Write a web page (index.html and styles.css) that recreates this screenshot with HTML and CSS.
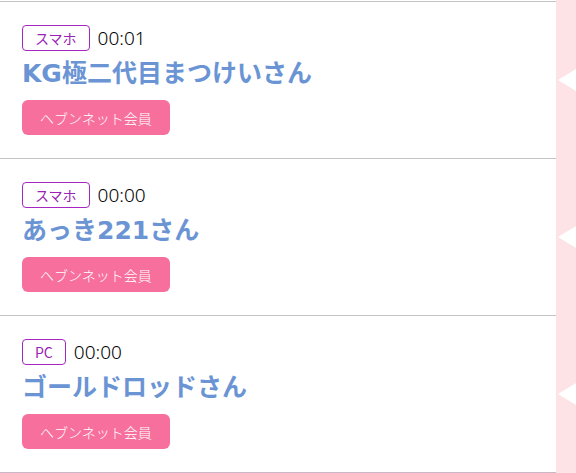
FILE: index.html
```html
<!DOCTYPE html>
<html lang="ja">
<head>
	<meta charset="utf-8" />
	<title>アクセス履歴</title>
	<link rel="stylesheet" href="styles.css">
</head>
<body>
	<ul class="visitors">
		<li class="visitor">
			<div class="meta">
				<span class="device">スマホ</span>
				<span class="time">00:01</span>
			</div>
			<div class="name">KG極二代目まつけいさん</div>
			<span class="member">ヘブンネット会員</span>
		</li>
		<li class="visitor">
			<div class="meta">
				<span class="device">スマホ</span>
				<span class="time">00:00</span>
			</div>
			<div class="name">あっき221さん</div>
			<span class="member">ヘブンネット会員</span>
		</li>
		<li class="visitor">
			<div class="meta">
				<span class="device">PC</span>
				<span class="time">00:00</span>
			</div>
			<div class="name">ゴールドロッドさん</div>
			<span class="member">ヘブンネット会員</span>
		</li>
	</ul>
</body>
</html>
```

FILE: styles.css
```css
body
{
	margin: 0;
	min-height: 473px;
	background: linear-gradient(to right, #FFFFFF 556px, #FDE3E5 556px);
	font-family: "Noto Sans CJK JP", "Noto Sans", sans-serif;
}

ul.visitors
{
	list-style: none;
	margin: 0;
	padding: 1px 0 0;
	width: 556px;
	background-color: #FFFFFF;
}

	ul.visitors li.visitor
	{
		position: relative;
		height: 157px;
		box-sizing: border-box;
		padding: 23px 0 0 22px;
		border-top: 1px solid #C4C4C4;
	}

	ul.visitors li.visitor:last-child
	{
		height: 158px;
		border-bottom: 1px solid #C8B8C6;
	}

	ul.visitors li.visitor::after
	{
		content: "";
		position: absolute;
		left: 558px;
		top: 67px;
		border-right: 18px solid #FFFFFF;
		border-top: 11px solid transparent;
		border-bottom: 11px solid transparent;
	}

div.meta
{
	display: flex;
	align-items: center;
	gap: 8px;
	height: 26px;
}

	div.meta span.device
	{
		display: flex;
		align-items: center;
		box-sizing: border-box;
		height: 26px;
		padding: 0 12px;
		border: 1.5px solid #A626C2;
		border-radius: 4px;
		color: #9A22B4;
		font-size: 14px;
	}

	div.meta span.time
	{
		font-size: 19px;
		font-weight: 300;
		color: #000000;
		font-family: "Noto Sans", sans-serif;
	}

div.name
{
	margin: 5px 0 8px;
	height: 36px;
	line-height: 36px;
	font-size: 25px;
	font-weight: bold;
	color: #6A94D4;
	font-family: "DejaVu Sans", "Noto Sans CJK JP", sans-serif;
}

span.member
{
	display: inline-flex;
	align-items: center;
	height: 35px;
	padding: 0 18px;
	border-radius: 6px;
	background-color: #F7709D;
	color: #FFFFFF;
	font-size: 14px;
	font-weight: 300;
}
```
